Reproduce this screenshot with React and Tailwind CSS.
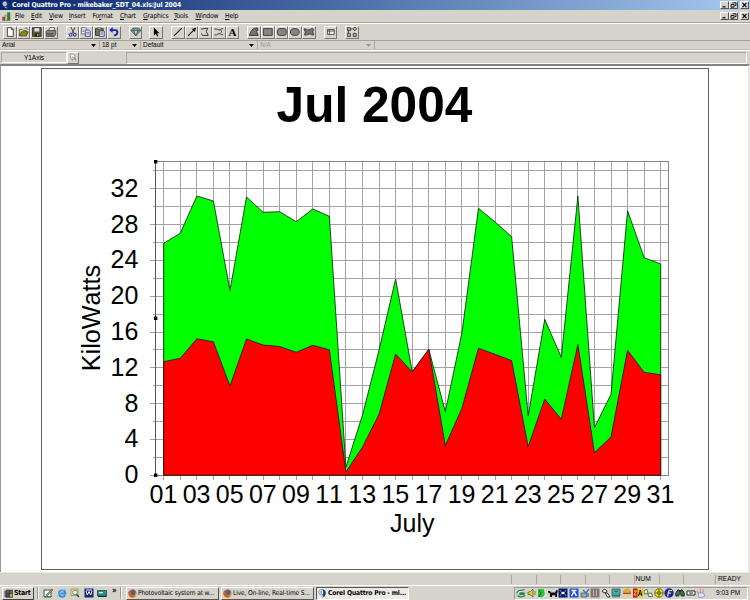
import React from "react";

const greenY = [243.3, 233.3, 196, 201, 290.5, 197, 212.3, 211.7, 221.7, 209, 216.3, 467, 415, 350, 279, 371.7, 349.3, 411.7, 333, 208.3, 222, 236.7, 416, 319.3, 357.3, 196, 427.7, 394.3, 210.7, 257.7, 264];
const redY = [361.7, 358.3, 338.8, 341.8, 386, 339, 345, 346.5, 352.3, 345.3, 349.8, 472, 447, 414.3, 354, 372, 349.3, 445.5, 408.3, 348.3, 354.3, 360.5, 446.7, 399, 419.3, 344.5, 452.7, 437, 350.3, 372.3, 374.8];

const dayX = (i) => 163.7 + i * 16.567;
const valueY = (v) => 475.2 - v * 8.95;
const snap = (n) => Math.floor(n) + 0.5;
const area = (ys) =>
  `M${dayX(0)},475.2 ` + ys.map((y, i) => `L${dayX(i)},${y}`).join(" ") + ` L${dayX(30)},475.2 Z`;

const days = Array.from({ length: 31 }, (_, i) => i);
const steps = Array.from({ length: 17 }, (_, i) => i * 2);

function Chart() {
  return (
    <svg className="block [font-kerning:none]" width="666" height="500" viewBox="42 69 666 500" fontFamily="'Liberation Sans', Arial, sans-serif">
      <text x="374.5" y="122" fontSize="49.6" fontWeight="700" textAnchor="middle">Jul 2004</text>
      {days.map((i) => (
        <line key={i} x1={snap(dayX(i))} x2={snap(dayX(i))} y1="162" y2="480" stroke="#a3a3a3" />
      ))}
      {[...steps, 34].map((v) => (
        <line key={v} x1={v % 4 === 0 ? 150 : 153} x2="669" y1={snap(valueY(v))} y2={snap(valueY(v))} stroke="#a3a3a3" />
      ))}
      <rect x="155.5" y="161.5" width="513" height="314" fill="none" stroke="#858585" />
      <path d={area(greenY)} fill="#00ff00" stroke="#032003" strokeWidth="0.8" />
      <path d={area(redY)} fill="#ff0000" stroke="#201000" strokeWidth="0.8" />
      <line x1="155.5" x2="155.5" y1="161" y2="476" stroke="#555" />
      {[160, 316.5, 473.5].map((y) => (
        <rect key={y} x="154" y={y} width="3.4" height="3.4" fill="#000" />
      ))}
      {steps.filter((v) => v % 4 === 0).map((v) => (
        <text key={v} x="138.3" y={valueY(v) + 8} fontSize="25" textAnchor="end">{v}</text>
      ))}
      {days.filter((i) => i % 2 === 0).map((i) => (
        <text key={i} x={dayX(i) - 0.3} y="502.8" fontSize="25" textAnchor="middle">{String(i + 1).padStart(2, "0")}</text>
      ))}
      <text x="412.3" y="531.7" fontSize="25" textAnchor="middle">July</text>
      <text transform="translate(100 318) rotate(-90)" fontSize="25.2" textAnchor="middle">KiloWatts</text>
    </svg>
  );
}

const ICONS = {
  new: <><path d="M3.5 1.5h4l2 2v7h-6z" fill="#fff" stroke="#222" strokeWidth=".8" /><path d="M7.5 1.5v2h2" fill="none" stroke="#222" strokeWidth=".8" /></>,
  open: <><path d="M1.5 10V3.5h3l1 1h3V6" fill="#e8e080" stroke="#55551a" strokeWidth=".8" /><path d="M1.5 10l2-4.3h7L8.7 10z" fill="#8c8c28" stroke="#33330d" strokeWidth=".7" /><path d="M7 2.3c1.5-1 2.5 0 3 1.2" fill="none" stroke="#222" strokeWidth=".7" /></>,
  save: <><path d="M1.5 1.5h9v9h-9z" fill="#5d5d35" stroke="#222" strokeWidth=".8" /><path d="M3.5 2h5v3.5h-5z" fill="#ddd" /><path d="M4 7.5h4.5v3H4z" fill="#222" /><path d="M6.5 8h1v2h-1z" fill="#ddd" /></>,
  print: <><path d="M3.5 5L5 1.5h5L9 5" fill="#eee" stroke="#333" strokeWidth=".7" /><path d="M1 5.5l1.5-1H11v4l-1.5 2H1.5z" fill="#8a8a8a" stroke="#333" strokeWidth=".8" /><path d="M2 7.5h7M2.5 9h6" stroke="#333" strokeWidth=".7" /></>,
  cut: <><path d="M4 1l3.3 6.5M8.3 1L5 7.5" stroke="#444" strokeWidth="1" /><circle cx="3.8" cy="8.8" r="1.5" fill="none" stroke="#1919a0" /><circle cx="8" cy="8.8" r="1.5" fill="none" stroke="#1919a0" /></>,
  copy: <><path d="M1.5 1.5h4l1.5 1.5v5H1.5z" fill="#eee" stroke="#444" strokeWidth=".7" /><path d="M5.5 4h3.500l1.500 1.500v5h-5z" fill="#dfe4ff" stroke="#222a88" strokeWidth=".8" /><path d="M2.5 4h2M2.5 5.5h2M6.5 6.5h3M6.5 8h3" stroke="#444" strokeWidth=".6" /></>,
  paste: <><path d="M1.5 2.5h8v7h-8z" fill="#74744a" stroke="#222" strokeWidth=".8" /><path d="M3.5 1.5h4v1.8h-4z" fill="#bbb" stroke="#333" strokeWidth=".5" /><path d="M5.5 5h5v5.5h-5z" fill="#eef" stroke="#222a88" strokeWidth=".8" /><path d="M6.5 6.8h3M6.5 8.3h3" stroke="#333" strokeWidth=".6" /></>,
  undo: <><path d="M3 4h4.5c3.2 0 3 5.5-1.5 5.5" fill="none" stroke="#1b27a8" strokeWidth="1.9" /><path d="M4.8 .9v6L1.2 4z" fill="#1b27a8" /></>,
  gem: <path d="M1 4.5l2-2.5h6l2 2.5-5 5.5zM1 4.5h10M4 4.5L6 10l2-5.5L6 2z" fill="#78aaa0" stroke="#34544d" strokeWidth=".8" />,
  pointer: <path d="M4 1.5v8l2-1.8 1.3 3 1.2-.6-1.3-2.8h2.5z" fill="#000" />,
  line: <path d="M2 10L10 2" stroke="#222" strokeWidth="1.1" />,
  arrow: <><path d="M2 10L8 4" stroke="#222" strokeWidth="1.2" /><path d="M10.5 1.5L9 6 6 3z" fill="#111" /></>,
  poly: <path d="M2 3l7-1-1.5 3.5L9.500 9.500H3.500l-1-2" fill="none" stroke="#333" strokeWidth="1" />,
  curve: <path d="M1.5 3c3-1 4 2 6 .5s2-.5 3-1M1.5 9c3 1 4-2.5 6-1s2 .5 3 .5M8 4c1 1.5 1 2 0 3" fill="none" stroke="#333" strokeWidth="1" />,
  block: <path d="M1.5 9.500c1-4 3-7 5.500-7.500h3v2.500H8.500l2 5z" fill="#747474" stroke="#333" strokeWidth=".9" />,
  rect: <path d="M1.500 2.500h9v7h-9z" fill="#858585" stroke="#333" strokeWidth=".9" />,
  round: <rect x="1.5" y="2.5" width="9" height="7" rx="2.3" fill="#858585" stroke="#333" strokeWidth=".9" />,
  oval: <ellipse cx="6" cy="6" rx="4.6" ry="3.5" fill="#858585" stroke="#333" strokeWidth=".9" />,
  blob: <path d="M1 3c2-1 3 1.500 5 .800s3-1.800 5-.800L10 6l1 3c-2 .800-3-1.500-5-.800S3 9.500 1.500 9L2.500 6z" fill="#747474" stroke="#333" strokeWidth=".9" />,
  table: <path d="M2.5 3.5h7v5h-7zM4.5 3.5v5M2.5 5h7" fill="#eee" stroke="#333" strokeWidth=".8" />,
  tree: <path d="M1.500 1.500h3v3h-3zM1.500 7.500h3v3h-3zM7.500 7.500h3v3h-3zM2.500 4.500v3M9 .800l2 2-2 2-2-2zM5 3h1.500" fill="#bbb" stroke="#333" strokeWidth=".9" />,
};

function Glyph({ name }) {
  return <svg className="block" width="12" height="12" viewBox="0 0 12 12">{ICONS[name]}</svg>;
}

function ToolButton({ name, children }) {
  return (
    <div className="flex h-[13px] w-[13.7px] shrink-0 items-center justify-center border border-t-white border-l-white border-r-[#77756f] border-b-[#77756f]">
      {name ? <Glyph name={name} /> : children}
    </div>
  );
}

function WindowButtons() {
  const cls = "flex h-[8px] w-[9px] items-center justify-center border border-t-white border-l-white border-r-[#555] border-b-[#555] bg-[#d6d3ca]";
  return (
    <div className="ml-auto flex pr-[1px]">
      <div className={cls}><svg width="7" height="6" viewBox="0 0 7 6"><path d="M1.5 4.8h3" stroke="#000" strokeWidth="1.2" /></svg></div>
      <div className={cls}><svg width="7" height="6" viewBox="0 0 7 6"><path d="M2.5 .8h3.5v2.7h-1M1 2.5h3v2.7H1z" fill="none" stroke="#000" strokeWidth=".9" /></svg></div>
      <div className={cls + " ml-[2px]"}><svg width="7" height="6" viewBox="0 0 7 6"><path d="M1.5 .8l4 4.4M5.5 .8l-4 4.4" stroke="#000" strokeWidth="1.1" /></svg></div>
    </div>
  );
}

const MENU = [
  ["F", "ile", "w-[16px]", ""], ["E", "dit", "w-[18px]", ""], ["V", "iew", "w-[20px]", ""], ["I", "nsert", "w-[23.5px]", ""],
  ["r", "mat", "w-[27.5px]", "Fo"], ["C", "hart", "w-[23px]", ""], ["G", "raphics", "w-[31px]", ""], ["T", "ools", "w-[21.5px]", ""],
  ["W", "indow", "w-[29.5px]", ""], ["H", "elp", "w-[20px]", ""],
];

function Caret({ dim }) {
  return <svg className="ml-auto mr-[3px] block" width="5" height="3" viewBox="0 0 5 3"><path d="M0 0h5L2.5 3z" fill={dim ? "#999" : "#000"} /></svg>;
}

function CorelIcon({ size }) {
  return (
    <svg className="block shrink-0" width={size} height={size} viewBox="0 0 10 10">
      <ellipse cx="4" cy="3.5" rx="3.2" ry="3" fill="#eaf3fb" stroke="#5878a8" strokeWidth=".7" />
      <path d="M4.5 .5c5 0 5.5 5 2 8.5L5 9.5 5.3 6C6.5 4 6 2 4.5 .5z" fill="#173a7a" />
      <path d="M2.5 2v3M4 1.5v4" stroke="#4b8fc4" strokeWidth=".8" />
      <path d="M3 7.5l3.5 1.5" stroke="#9fc3df" strokeWidth="1" />
    </svg>
  );
}

function Firefox() {
  return (
    <svg className="block shrink-0" width="9" height="9" viewBox="0 0 10 10">
      <circle cx="5" cy="5" r="4.6" fill="#e0701a" />
      <circle cx="5.5" cy="3.9" r="2.9" fill="#3565ad" />
      <path d="M.6 3C0 8 5 11 8.5 8 6 8.5 4 7.5 4.5 5.8L2.5 4 3 2z" fill="#d95a12" />
      <path d="M9.3 3.5c.8 3-1 5.5-3.3 6 2-1.5 2.8-3 2.3-5.5z" fill="#f6b034" />
    </svg>
  );
}

const QUICK = [
  <><path d="M1 2h7v7H1z" fill="#fff" stroke="#2c5c50" strokeWidth="1" /><path d="M3 7l6-6 1 1-6 6z" fill="#cf9b35" stroke="#333" strokeWidth=".5" /><path d="M1.5 8.5h7" stroke="#297a9d" /></>,
  <><path d="M8 7c-1.5 3-6 2.3-6-1.5s6-4.5 6.5 0H3.5" fill="none" stroke="#2f8fe0" strokeWidth="1.9" /><path d="M.7 8.5C1 5 5 1.5 9.5 1.5" fill="none" stroke="#79bdf2" strokeWidth=".9" /></>,
  <><path d="M1 1h7v6.5H1z" fill="#f5e67e" stroke="#8b8a2e" strokeWidth=".7" /><circle cx="5" cy="4.5" r="2.3" fill="#e7f6ff" stroke="#38798e" strokeWidth=".8" /><path d="M6.5 6.5L9 9" stroke="#333" strokeWidth="1.3" /></>,
  <><path d="M.5 .5h9v9h-9z" fill="#16247c" /><path d="M2 3l1.3 4L5 3.5 6.7 7 8 3M2 2h6" fill="none" stroke="#fff" strokeWidth="1" /></>,
  <><path d="M.5 2.5h9v5.5h-9z" fill="#2f8a8a" stroke="#164b4b" strokeWidth=".8" /><path d="M2 4h4v1.3H2z" fill="#bff" /><path d="M1 8.5h8.5" stroke="#222" /></>,
];

const TRAY = [
  <><path d="M1 5.500C1 1 5 3.500 8.500 1.500M4 5h4v1.500H4zM1.500 7.500c2 2 6 1.500 7.500 0" fill="#fff" stroke="#2a8a45" strokeWidth="1.300" /></>,
  <><path d="M1 4h2l3-3v8L3 6.5H1z" fill="#e8d72f" stroke="#555a1c" strokeWidth=".8" /><path d="M8 3v4" stroke="#666" strokeWidth=".8" /></>,
  <><path d="M1 1h8v8H1z" fill="#2fc13f" /><path d="M2 2.500l2 2.500-2 4" stroke="#0f5c1f" fill="none" /><path d="M7 1h2v8H6l2-3z" fill="#d6f0d8" /></>,
  <path d="M0 3h2l1 1.500h4L8.500 2l1.500.500L9 6v3H7.300V7.300H4V9H2V5.500L0 4.500z" fill="#0a0a0a" />,
  <><path d="M.5 .5h9v9h-9z" fill="#0c1660" /><path d="M2 2l2 3-2 3M8 2L6 5l2 3" stroke="#6f8af5" fill="none" /><circle cx="5" cy="5" r="1.300" fill="#fff" /></>,
  <><path d="M.5 .5h9v9h-9z" fill="#1b52d7" /><path d="M2.500 2.500h5M5 3.500L2.500 8M5 3.500L7.500 8" stroke="#fff" fill="none" strokeWidth="1.500" /></>,
  <><path d="M1 5h6v4H1z" fill="#a1a9b8" stroke="#444" strokeWidth=".7" /><path d="M3 2l3 3 3-4M8 5v4" stroke="#3474b8" strokeWidth="1.3" fill="none" /></>,
  <><path d="M.5 .5h9v9h-9z" fill="#718278" /><path d="M2 2v6M5 1v7M8 2v6M1 4h8" stroke="#c24d58" strokeWidth=".9" /><path d="M3.5 2v6M6.5 2v6" stroke="#ade3bb" strokeWidth=".8" /></>,
  <path d="M1.500 4C1.500 0 6 1 6 4L3.500 4.500zM4 5l3 .500L9 9H6.500z" fill="#fff" stroke="#222" strokeWidth=".9" />,
  <><path d="M1 1h8v6.5H1z" fill="#48aaa8" stroke="#37625e" strokeWidth=".9" /><path d="M1 8.800h8M3 3.500h4" stroke="#356b69" /></>,
  <><path d="M1.500 4c0-4 7-4 7 0z" fill="#f3b51f" stroke="#b5780e" strokeWidth=".6" /><path d="M1 5.300h8" stroke="#a33327" strokeWidth="1.2" /><path d="M1.500 6.500h7V8h-7z" fill="#f5cf2b" /></>,
  <><path d="M0 .5h10v9H0z" fill="#f0cb1c" /><path d="M0 .5h4.5v9H0z" fill="#c9191c" /><path d="M1 3h2.5L1 7h2.500" stroke="#f8df30" fill="none" /><path d="M5.5 8L7.3 2 9 8M6 6h2.5" stroke="#111" fill="none" /></>,
  <path d="M1 2.500l3-1 1 4-3.500.500zM5 5.500l3.500-.500L9.500 8.500H5.500z" fill="#f5f5e0" stroke="#4b6b30" strokeWidth=".9" />,
  <><circle cx="5" cy="5" r="4.2" fill="#f8ee2b" stroke="#6f6a15" strokeWidth="1" /><path d="M5 1v8M1 5h8" stroke="#4b4b18" strokeWidth=".8" /><circle cx="5" cy="5" r="1.800" fill="none" stroke="#4b4b18" strokeWidth=".7" /></>,
  <><circle cx="5" cy="5" r="4.7" fill="#1024b8" /><path d="M3.500 8.500L5 2.500h3M3.500 5.200h3.500" stroke="#f4e74a" strokeWidth="1.2" fill="none" /></>,
  <><path d="M.800 8V5l2-3h1.500v2h1.400V2h1.500l2 3v3H6.200V6H3.800v2z" fill="#477752" stroke="#132d1d" strokeWidth="1" /></>,
  <path d="M1 3h8v4H1zM3 5h4" fill="#fff" stroke="#222" strokeWidth="1" />,
  <><path d="M2.500 6L1 2.500M4.500 5V1M6.500 5.500l1-4" stroke="#d592a6" strokeWidth="1.2" /><path d="M2 5h5.500L9 8l-3 1.5H3z" fill="#e5dff0" stroke="#8587b9" strokeWidth=".7" /></>,
];

function TaskButton({ icon, children, active }) {
  const state = active
    ? "bg-[#eceae5] border-t-[#555] border-l-[#555] border-r-white border-b-white font-bold text-[6.7px] tracking-[-0.02em]"
    : "border-t-white border-l-white border-r-[#555] border-b-[#555] text-[6.6px] tracking-[-0.02em]";
  return (
    <div className={"mr-[2px] flex h-[13px] w-[93px] shrink-0 items-center gap-[1px] border pl-[1px] whitespace-nowrap " + state}>
      {icon}<span>{children}</span>
    </div>
  );
}

export default function App() {
  return (
    <div className="flex h-[600px] w-[750px] flex-col overflow-hidden bg-[#d6d3ca] text-[7px] leading-none text-black [font-family:'DejaVu_Sans_Condensed','DejaVu_Sans',sans-serif]">
      <div className="flex h-[10px] shrink-0 items-center bg-gradient-to-r from-[#0a246a] to-[#a6caf0] pl-[2px] text-[6.8px] font-bold text-white">
        <CorelIcon size="8" />
        <span className="ml-[2px] whitespace-nowrap tracking-[-0.015em]">Corel Quattro Pro - mikebaker_SDT_04.xls:Jul 2004</span>
        <WindowButtons />
      </div>

      <div className="flex h-[13px] shrink-0 items-center border-b border-[#a5a29b] pl-[2px] text-[6.8px] tracking-[-0.03em]">
        <svg className="mr-[4px] block shrink-0" width="9" height="9" viewBox="0 0 9 9">
          <path d="M.5 5h2.5v3.5H.5z" fill="#c01cb5" stroke="#555" strokeWidth=".4" />
          <path d="M3 3h2.5v5.5H3z" fill="#d8d020" stroke="#555" strokeWidth=".4" />
          <path d="M5.5 .5H8v8H5.5z" fill="#168c45" stroke="#555" strokeWidth=".4" />
        </svg>
        {MENU.map(([key, rest, width, lead]) => (
          <span key={lead + key + rest} className={"shrink-0 whitespace-nowrap " + width}>
            {lead}<span className="underline decoration-[0.6px] underline-offset-1">{key}</span>{rest}
          </span>
        ))}
        <WindowButtons />
      </div>

      <div className="flex h-[18px] shrink-0 items-center border-t border-t-white border-b border-b-[#a5a29b] pl-[3px]">
        {["new", "open", "save", "print"].map((n) => <ToolButton key={n} name={n} />)}
        <div className="w-[8px]" />
        {["cut", "copy", "paste", "undo"].map((n) => <ToolButton key={n} name={n} />)}
        <div className="w-[8px]" />
        <ToolButton name="gem" />
        <div className="w-[7px]" />
        <ToolButton name="pointer" />
        <div className="w-[8px]" />
        {["line", "arrow", "poly", "curve"].map((n) => <ToolButton key={n} name={n} />)}
        <ToolButton><span className="[font-family:'Liberation_Serif',serif] text-[11px] font-bold">A</span></ToolButton>
        <div className="w-[8px]" />
        {["block", "rect", "round", "oval", "blob"].map((n) => <ToolButton key={n} name={n} />)}
        <div className="w-[8px]" />
        <ToolButton name="table" />
        <div className="w-[8px]" />
        <ToolButton name="tree" />
      </div>

      <div className="flex h-[9px] shrink-0 items-center border-b border-[#bebbb3] text-[6.5px] [font-family:'Liberation_Sans',Arial,sans-serif]">
        <div className="flex h-full w-[100px] items-center border-r border-[#aaa79f] pl-[2px]">Arial<Caret /></div>
        <div className="flex h-full w-[41px] items-center border-r border-[#aaa79f] pl-[2px]">18 pt<Caret /></div>
        <div className="flex h-full w-[117px] items-center border-r border-[#aaa79f] pl-[2px]">Default<Caret /></div>
        <div className="flex h-full w-[117px] items-center border-r border-[#aaa79f] pl-[2px] text-[#9a978f]">N/A<Caret dim /></div>
      </div>

      <div className="flex h-[14px] shrink-0 items-center border-t border-white pl-[1px] text-[6.5px] [font-family:'Liberation_Sans',Arial,sans-serif]">
        <div className="flex h-[11px] w-[66px] items-center justify-center border border-t-[#aaa79f] border-l-[#aaa79f] border-r-white border-b-white pt-[1px]">Y1Axis</div>
        <div className="flex h-[12px] w-[12px] items-center justify-center border border-t-white border-l-white border-r-[#77756f] border-b-[#77756f]">
          <svg width="10" height="9" viewBox="0 0 10 9"><path d="M2 1h4l1 2v3H3z" fill="#eee" stroke="#888" strokeWidth=".7" /><path d="M4 4l3 1 1 3M5 6l-1 2" stroke="#888" fill="none" strokeWidth=".8" /></svg>
        </div>
        <div className="ml-[47px] h-[12px] w-[621px] border border-t-[#aaa79f] border-l-[#aaa79f] border-r-white border-b-white" />
      </div>

      <div className="flex h-[508px] shrink-0 border-t-2 border-t-[#85837e] border-l border-l-[#999] border-r-2 border-r-[#e8e6e0] bg-white pt-[2px] pl-[40px]">
        <div className="h-[502px] w-[668px] shrink-0 border border-[#606060]"><Chart /></div>
      </div>

      <div className="flex h-[13px] shrink-0 items-center border-t border-[#eceae6] pl-[511px] text-[6.7px] [font-family:'Liberation_Sans',Arial,sans-serif]">
        {["", "", "", "", ""].map((_, i) => <div key={i} className="h-[9px] w-[24.5px] shrink-0 border-l border-[#aaa79f]" />)}
        <div className="flex h-[9px] w-[25px] shrink-0 items-center border-l border-[#aaa79f] pl-[1px]">NUM</div>
        <div className="h-[9px] w-[24.5px] shrink-0 border-l border-[#aaa79f]" />
        <div className="h-[9px] w-[32px] shrink-0 border-l border-[#aaa79f]" />
        <div className="flex h-[9px] w-[32px] shrink-0 items-center border-l border-[#aaa79f] pl-[2px]">READY</div>
      </div>

      <div className="flex h-[15px] shrink-0 items-center border-t border-white pl-[2px]">
        <div className="flex h-[13px] w-[32px] shrink-0 items-center gap-[1px] border border-t-white border-l-white border-r-[#444] border-b-[#444] pl-[1px] text-[7px] font-bold">
          <svg className="shrink-0" width="9" height="9" viewBox="0 0 9 9">
            <path d="M0 3h2M0 5h2M0 7h2" stroke="#333" strokeWidth=".8" />
            <path d="M2 1.5h3.3v3H2z" fill="#d23b28" /><path d="M5.6 1.5h3v3h-3z" fill="#319446" />
            <path d="M2 4.8h3.3V8H2z" fill="#2656b5" /><path d="M5.6 4.8h3V8h-3z" fill="#e3b624" />
            <path d="M2 1.2h6.8v7H2zM5.4 1v7M2 4.6h6.8" fill="none" stroke="#111" strokeWidth=".7" />
          </svg>
          <span className="tracking-[-0.04em]">Start</span>
        </div>
        <div className="ml-[3px] h-[12px] w-[2px] border-l border-[#999] bg-white" />
        <div className="ml-[4px] flex w-[69px] items-center gap-[3.5px]">
          {QUICK.map((g, i) => <svg key={i} className="block shrink-0" width="10" height="10" viewBox="0 0 10 10">{g}</svg>)}
        </div>
        <div className="-mt-[4px] w-[7px] text-[8px] font-bold">»</div>
        <div className="ml-[1px] h-[12px] w-[2px] border-l border-[#999] bg-white" />
        <div className="ml-[4px] flex">
          <TaskButton icon={<Firefox />}>Photovoltaic system at w...</TaskButton>
          <TaskButton icon={<Firefox />}>Live, On-line, Real-time S...</TaskButton>
          <TaskButton active icon={<CorelIcon size="9" />}>Corel Quattro Pro - mi...</TaskButton>
        </div>
        <div className="mr-[2px] ml-auto flex h-[13px] w-[234px] shrink-0 items-center border border-t-[#999] border-l-[#999] border-r-white border-b-white pl-[1px]">
          <div className="flex w-[200px] gap-[0.6px]">
            {TRAY.map((g, i) => <svg key={i} className="block shrink-0" width="10" height="10" viewBox="0 0 10 10">{g}</svg>)}
          </div>
          <span className="text-[6.5px] whitespace-nowrap [font-family:'Liberation_Sans',Arial,sans-serif]">9:03 PM</span>
        </div>
      </div>
    </div>
  );
}
